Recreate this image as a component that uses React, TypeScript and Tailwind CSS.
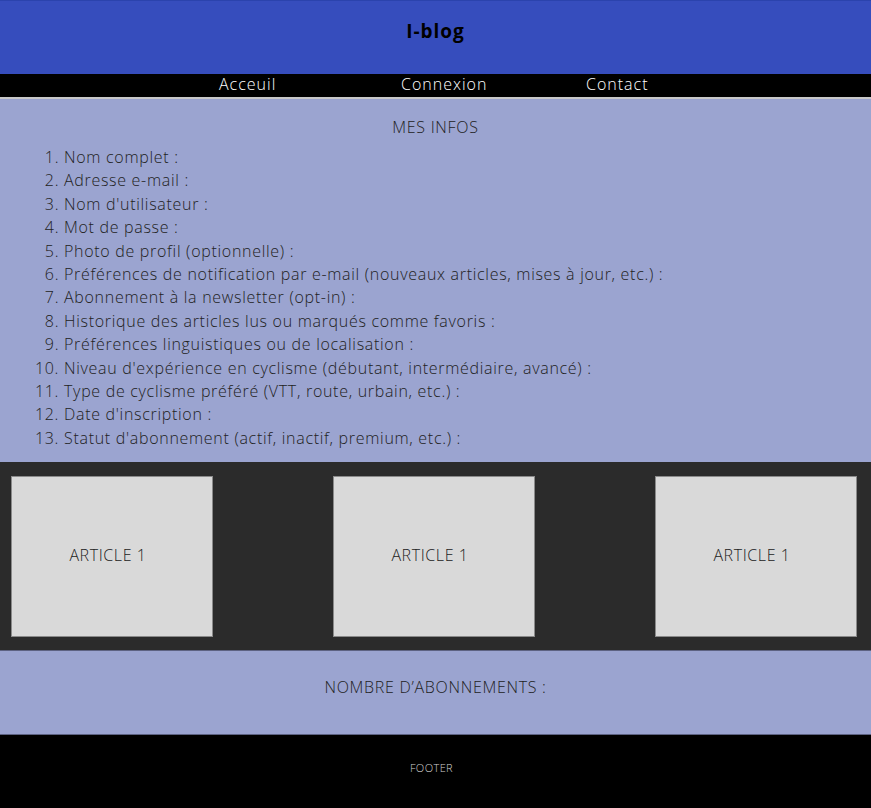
import React from 'react';

const infos = [
  "Nom complet :",
  "Adresse e-mail :",
  "Nom d'utilisateur :",
  "Mot de passe :",
  "Photo de profil (optionnelle) :",
  "Préférences de notification par e-mail (nouveaux articles, mises à jour, etc.) :",
  "Abonnement à la newsletter (opt-in) :",
  "Historique des articles lus ou marqués comme favoris :",
  "Préférences linguistiques ou de localisation :",
  "Niveau d'expérience en cyclisme (débutant, intermédiaire, avancé) :",
  "Type de cyclisme préféré (VTT, route, urbain, etc.) :",
  "Date d'inscription :",
  "Statut d'abonnement (actif, inactif, premium, etc.) :",
];

const ArticleCard = () => (
  <div className="w-[202px] h-[161px] bg-[#d9d9d9] border border-[#8a8a8a] flex items-center justify-center">
    <span className="text-[16px] font-light text-[#222] tracking-[0.6px] pr-2 pb-[4px]">ARTICLE 1</span>
  </div>
);

export default function App() {
  return (
    <div className="w-full min-h-screen bg-black" style={{ fontFamily: '"Open Sans", "Noto Sans", sans-serif' }}>
      {/* Header */}
      <header className="h-[74px] bg-[#364dbd] border-t border-[#2b43ad] flex justify-center pt-[18px]">
        <h1 className="text-[19px] font-bold text-black leading-[24px] tracking-[1px]">I-blog</h1>
      </header>

      {/* Nav */}
      <nav className="h-[25px] bg-black border-b-2 border-[#c8c8c8] flex items-start pl-[219px] text-white font-light text-[16px] tracking-[1px] leading-[20px]">
        <a className="w-[182px]">Acceuil</a>
        <a className="w-[185px]">Connexion</a>
        <a>Contact</a>
      </nav>

      {/* Mes infos */}
      <section className="bg-[#9ba4d0] pt-[17px] pb-[12px] text-[#222]">
        <h2 className="text-center text-[16px] font-light leading-[22px] mb-[8px] tracking-[0.7px]">MES INFOS</h2>
        <ol className="list-decimal pl-[64px] text-[16px] font-light leading-[23.4px] tracking-[0.7px]">
          {infos.map((item) => (
            <li key={item}>{item}</li>
          ))}
        </ol>
      </section>

      {/* Articles */}
      <section className="bg-[#2b2b2b] flex justify-between pl-[11px] pr-[14px] pt-[14px] pb-[13px]">
        <ArticleCard />
        <ArticleCard />
        <ArticleCard />
      </section>

      {/* Abonnements */}
      <section className="h-[85px] bg-[#9ba4d0] border-y border-[#5d6282] flex items-center justify-center">
        <p className="text-[16px] font-light text-[#222] tracking-[0.7px] pb-[12px]">NOMBRE D’ABONNEMENTS :</p>
      </section>

      {/* Footer */}
      <footer className="h-[72px] bg-black flex items-center justify-center">
        <p className="text-[11px] font-light text-[#d0d0d0] tracking-[0.4px] pr-[8px] pb-[6px]">FOOTER</p>
      </footer>
    </div>
  );
}
